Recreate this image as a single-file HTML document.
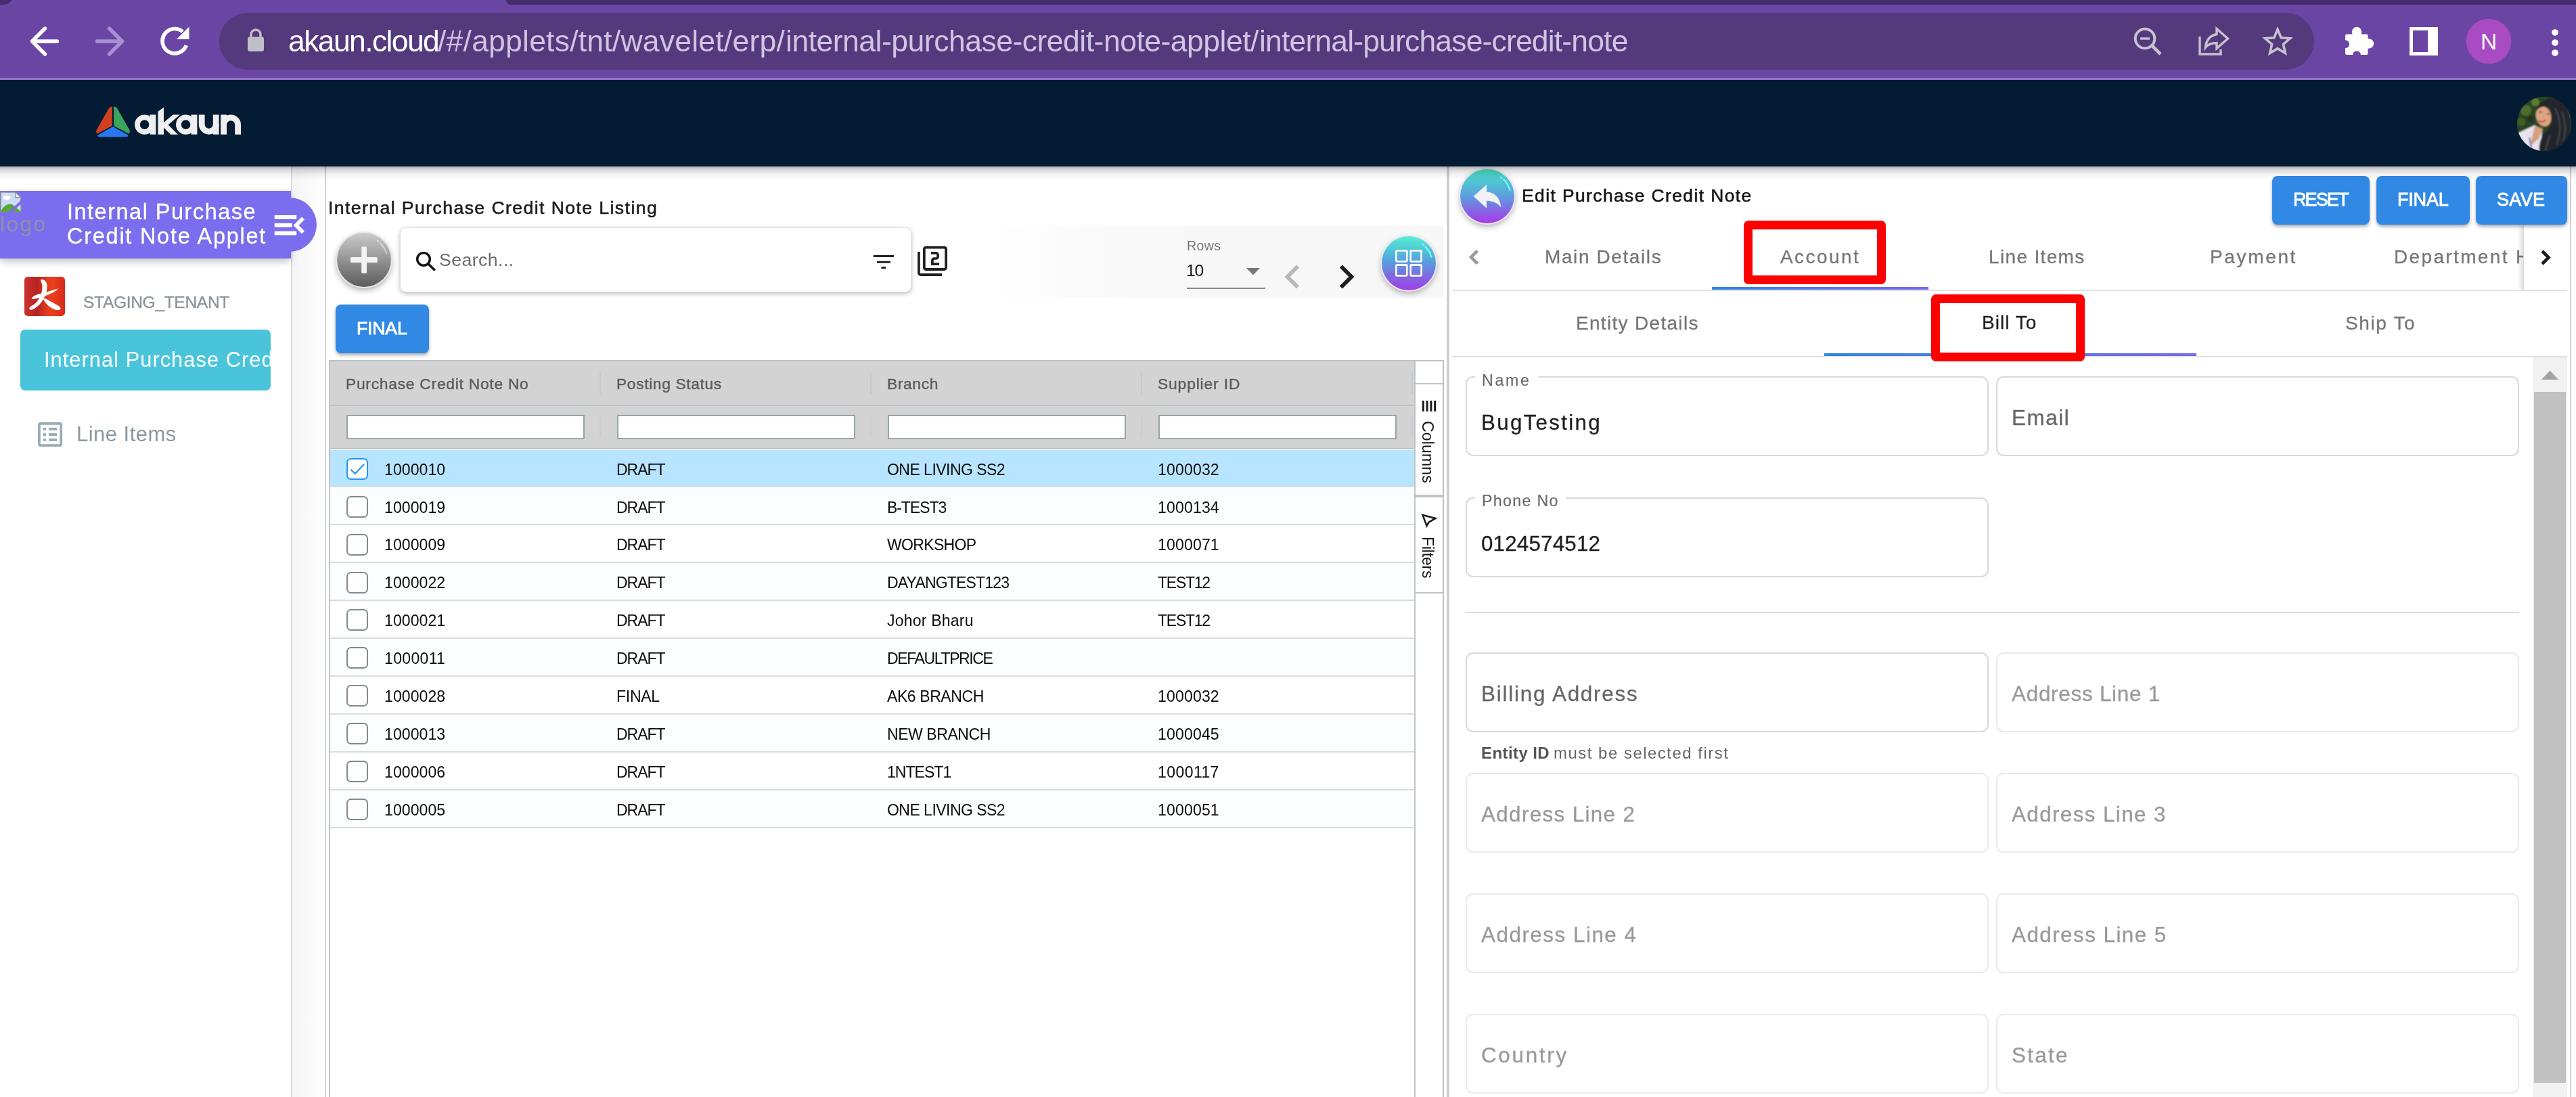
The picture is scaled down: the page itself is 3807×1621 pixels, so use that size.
<!DOCTYPE html><html><head><meta charset="utf-8"><title>Internal Purchase Credit Note</title><style>html,body{margin:0;padding:0;background:#fff;}body{width:3807px;height:1621px;position:relative;overflow:hidden;font-family:"Liberation Sans", sans-serif;}svg{position:absolute;overflow:visible}</style></head><body><div style="position:absolute;left:0px;top:0px;width:3807px;height:118px;background:#6b45a4"></div><div style="position:absolute;left:0px;top:114.5px;width:3807px;height:3.5px;background:#9675c7"></div><div style="position:absolute;left:748px;top:0px;width:3100px;height:7px;background:#452c6d;border-radius:0 0 0 9px"></div><div style="position:absolute;left:-12px;top:-12px;width:31px;height:18.5px;background:#452c6d;border-radius:0 0 14px 0"></div><div style="position:absolute;left:324px;top:19px;width:3096px;height:84px;background:#54397d;border-radius:42px"></div><svg style="left:0;top:0;" width="3807" height="1621" viewBox="0 0 3807 1621"><g fill="none" stroke="#fff" stroke-width="5.4" stroke-linecap="round" stroke-linejoin="round"><path d="M84.5 61H48.5M66.5 42L47.5 61L66.5 80"/></g><g fill="none" stroke="#a88fd3" stroke-width="5.4" stroke-linecap="round" stroke-linejoin="round"><path d="M143.5 61H179.5M161.5 42L180.5 61L161.5 80"/></g><g fill="none" stroke="#fff" stroke-width="5.6"><path d="M275.3 67A18.2 18.2 0 1 1 270 46.8"/></g><path d="M279.5 39.5V58H261Z" fill="#fff"/><rect x="366" y="54.5" width="24" height="21.5" rx="3" fill="#c0bfc6"/><path d="M371 56V51a7 7 0 0 1 14 0V56" fill="none" stroke="#c0bfc6" stroke-width="3.4"/><g fill="none" stroke="#c6c2cf" stroke-width="4"><circle cx="3170" cy="57" r="14.3"/><path d="M3180.5 67.5L3193 80" stroke-width="4.6"/><path d="M3163 57H3177" stroke-width="3.4"/></g><g fill="none" stroke="#c6c2cf" stroke-width="3.4" stroke-linejoin="miter"><path d="M3251 54V80H3282V73"/><path d="M3276 42.5L3292.5 57L3276 71.5V63.5C3268 63.5 3263 65.5 3259.5 70C3260.5 60 3266 52.5 3276 50.5Z"/></g><path d="M3366.0 43.4L3371.2 55.7L3384.5 56.8L3374.4 65.5L3377.4 78.5L3366.0 71.6L3354.6 78.5L3357.6 65.5L3347.5 56.8L3360.8 55.7Z" fill="none" stroke="#c6c2cf" stroke-width="3.6" stroke-linejoin="miter"/><rect x="3466" y="50.5" width="33.5" height="30.5" rx="2.5" fill="#fff"/><circle cx="3483" cy="47" r="7.2" fill="#fff"/><circle cx="3501" cy="64.5" r="7.2" fill="#fff"/><circle cx="3466" cy="65.3" r="6" fill="#6b45a4"/><circle cx="3483" cy="81.3" r="6" fill="#6b45a4"/><rect x="3563.5" y="42.5" width="37" height="37" fill="none" stroke="#fff" stroke-width="5"/><rect x="3588" y="42" width="14" height="38" fill="#fff"/><circle cx="3678" cy="61" r="33.3" fill="#a94bc2"/><circle cx="3776" cy="48" r="4.8" fill="#fff"/><circle cx="3776" cy="63" r="4.8" fill="#fff"/><circle cx="3776" cy="78" r="4.8" fill="#fff"/></svg><div id="t0" style="position:absolute;left:426.33px;top:38.53px;font-size:44.5px;line-height:44.5px;white-space:nowrap;will-change:transform;color:#fff;font-weight:400;letter-spacing:-1.613px;">akaun.cloud</div><div id="t1" style="position:absolute;left:646.93px;top:38.53px;font-size:44.5px;line-height:44.5px;white-space:nowrap;will-change:transform;color:#cfc4e2;font-weight:400;letter-spacing:0.217px;">/#/applets/tnt/wavelet/erp/</div><div id="t2" style="position:absolute;left:1160.63px;top:38.53px;font-size:44.5px;line-height:44.5px;white-space:nowrap;will-change:transform;color:#cfc4e2;font-weight:400;letter-spacing:-0.496px;">internal-purchase-credit-note-applet/</div><div id="t3" style="position:absolute;left:1861.33px;top:38.53px;font-size:44.5px;line-height:44.5px;white-space:nowrap;will-change:transform;color:#cfc4e2;font-weight:400;letter-spacing:-0.840px;">internal-purchase-credit-note</div><div id="t4" style="position:absolute;left:3665.98px;top:45.36px;font-size:33.6px;line-height:33.6px;white-space:nowrap;will-change:transform;color:#fff;font-weight:400;letter-spacing:-1.562px;">N</div><div style="position:absolute;left:430px;top:246px;width:51px;height:1400px;background:linear-gradient(90deg,#f5f5f5,#fefefe)"></div><div style="position:absolute;left:430px;top:246px;width:2px;height:1400px;background:#dcdcdc"></div><div style="position:absolute;left:480px;top:246px;width:2px;height:1400px;background:#d0d0d0"></div><div style="position:absolute;left:2138px;top:246px;width:4px;height:1400px;background:#cfcfcf"></div><div style="position:absolute;left:3798px;top:246px;width:2px;height:1400px;background:#d2d2d2"></div><div style="position:absolute;left:0px;top:282px;width:430px;height:100px;background:#7a6dee;box-shadow:0 5px 10px rgba(0,0,0,.22)"></div><div style="position:absolute;left:388px;top:292px;width:80px;height:80px;background:#7a6dee;border-radius:50%"></div><svg style="left:0;top:0;" width="3807" height="1621" viewBox="0 0 3807 1621"><path d="M1 284H23L31 292V313H1Z" fill="#cfdcf5" stroke="#8a8f99" stroke-width="1.6"/><path d="M23 284V292H31Z" fill="#f4f4f4" stroke="#8a8f99" stroke-width="1.4"/><path d="M1 313C5 303 14 298 21 304L31 313Z" fill="#5aa836"/><ellipse cx="10" cy="292" rx="5.5" ry="3.2" fill="#fff"/><path d="M12 316L34 296" stroke="#7a6dee" stroke-width="4"/></svg><div id="t5" style="position:absolute;left:-0.40px;top:316.05px;font-size:31.6px;line-height:31.6px;white-space:nowrap;will-change:transform;color:#9290a8;font-weight:400;letter-spacing:2.448px;">logo</div><div id="t6" style="position:absolute;left:99.05px;top:297.19px;font-size:32.5px;line-height:32.5px;white-space:nowrap;will-change:transform;color:#fff;font-weight:400;letter-spacing:1.492px;-webkit-text-stroke:.3px #fff;">Internal Purchase</div><div id="t7" style="position:absolute;left:98.55px;top:333.09px;font-size:32.5px;line-height:32.5px;white-space:nowrap;will-change:transform;color:#fff;font-weight:400;letter-spacing:1.741px;-webkit-text-stroke:.3px #fff;">Credit Note Applet</div><svg style="left:0;top:0;" width="3807" height="1621" viewBox="0 0 3807 1621"><g fill="#fff"><rect x="405.7" y="318" width="32.5" height="5.8"/><rect x="405.7" y="329.8" width="26" height="5.8"/><rect x="405.7" y="341.6" width="32.5" height="5.8"/></g><path d="M448 322.5L437.5 333L448 343.5" fill="none" stroke="#fff" stroke-width="5.6"/></svg><div style="position:absolute;left:36px;top:409px;width:60px;height:57.5px;border-radius:5px;background:linear-gradient(90deg,#cc332d 0%,#b72323 32%,#e23a1d 55%,#e8401c 70%,#d72a1b 100%)"></div><svg style="left:0;top:0;" width="3807" height="1621" viewBox="0 0 3807 1621"><g fill="#fff"><path d="M46.5 441C50 436 56 434.5 62 433.5L86.5 426.3C81 432 70 436.5 60 439.5C55 441 49.5 443 46.5 441Z"/><path d="M60.3 413.3C64 411.8 69 415.5 69.6 421C70.3 435 62 449.5 50.5 456.3C47 458.3 42.8 458.3 43.4 455.3C44 452.8 48 452 52 448.5C60 441 63.3 430 62.3 421C62 418 59.8 416 60.3 413.3Z"/><path d="M63 440C68 441.3 74 444.8 80 448.3C85 451.3 89.8 453 89.6 456C89.2 459 83 458.6 78 456.2C71 452.6 66 447 63 440Z"/></g></svg><div id="t8" style="position:absolute;left:122.92px;top:434.78px;font-size:24.6px;line-height:24.6px;white-space:nowrap;will-change:transform;color:#8b949a;font-weight:400;letter-spacing:-0.354px;-webkit-text-stroke:.35px #8b949a;">STAGING_TENANT</div><div style="position:absolute;left:30px;top:487px;width:370px;height:90px;background:#4ac4da;border-radius:7px"></div><div id="t9" style="position:absolute;left:64.55px;top:516.53px;font-size:30.8px;line-height:30.8px;white-space:nowrap;will-change:transform;color:#fff;font-weight:400;letter-spacing:1.040px;width:334.5px;overflow:hidden;">Internal Purchase Credit</div><svg style="left:0;top:0;" width="3807" height="1621" viewBox="0 0 3807 1621"><rect x="57.95" y="625.95" width="32.3" height="32.1" rx="1.6" fill="none" stroke="#9aabb4" stroke-width="3.7"/><g fill="#9aabb4"><rect x="64" y="632" width="4.1" height="3.9"/><rect x="72" y="632" width="12.1" height="3.9"/><rect x="64" y="640.1" width="4.1" height="3.9"/><rect x="72" y="640.1" width="12.1" height="3.9"/><rect x="64" y="648" width="4.1" height="3.9"/><rect x="72" y="648" width="12.1" height="3.9"/></g></svg><div id="t10" style="position:absolute;left:113.14px;top:625.76px;font-size:31px;line-height:31px;white-space:nowrap;will-change:transform;color:#8d979f;font-weight:400;letter-spacing:0.476px;">Line Items</div><div id="t11" style="position:absolute;left:485.40px;top:294.28px;font-size:26.6px;line-height:26.6px;white-space:nowrap;will-change:transform;color:#1b1b1b;font-weight:400;letter-spacing:1.420px;-webkit-text-stroke:.55px #1b1b1b;">Internal Purchase Credit Note Listing</div><div style="position:absolute;left:1460px;top:334px;width:674px;height:106px;background:linear-gradient(90deg,rgba(247,247,247,0),#fafafa 140px,#f7f7f7 330px)"></div><div style="position:absolute;left:498px;top:344px;width:80px;height:80px;border-radius:50%;background:linear-gradient(#cbcbcb,#a2a2a2 38%,#7c7c7c 70%,#5c5c5c);box-shadow:0 0 0 2px #ece5f2,0 4px 9px 1px rgba(0,0,0,.32)"></div><svg style="left:0;top:0;" width="3807" height="1621" viewBox="0 0 3807 1621"><g fill="#f2f2f2"><rect x="517.8" y="380.1" width="40.1" height="7.8" rx="2"/><rect x="534.2" y="364.2" width="7.8" height="39.8" rx="2"/></g><path d="M557 355.2A36 36 0 0 1 571.6 375.6" fill="none" stroke="rgba(255,255,255,.5)" stroke-width="2" stroke-dasharray="4 2 30"/></svg><div style="position:absolute;left:591px;top:336px;width:756px;height:95.5px;background:#fff;border-radius:9px;box-shadow:0 2px 6px rgba(0,0,0,.28);border:1px solid #e2e2e2;box-sizing:border-box"></div><svg style="left:0;top:0;" width="3807" height="1621" viewBox="0 0 3807 1621"><circle cx="626" cy="382.9" r="9.3" fill="none" stroke="#111" stroke-width="3.4"/><path d="M633 389.9L642.8 399.4" stroke="#111" stroke-width="3.5"/></svg><div id="t12" style="position:absolute;left:649.40px;top:371.28px;font-size:26.6px;line-height:26.6px;white-space:nowrap;will-change:transform;color:#6b6b6b;font-weight:400;letter-spacing:0.466px;">Search...</div><svg style="left:0;top:0;" width="3807" height="1621" viewBox="0 0 3807 1621"><g fill="#222"><rect x="1290.7" y="377" width="30.3" height="3"/><rect x="1296" y="385.8" width="20" height="3"/><rect x="1302.4" y="394" width="6.6" height="3"/></g></svg><svg style="left:0;top:0;" width="3807" height="1621" viewBox="0 0 3807 1621"><rect x="1365.8" y="365.6" width="32.3" height="32.4" rx="2.6" fill="none" stroke="#1f1f1f" stroke-width="3.8"/><path d="M1357.9 372V403a3 3 0 0 0 3 3H1392" fill="none" stroke="#1f1f1f" stroke-width="3.8"/><path d="M1376 373.9H1383.4a2.7 2.7 0 0 1 2.7 2.7V379.3a2.7 2.7 0 0 1-2.7 2.7H1380.6a2.7 2.7 0 0 0-2.7 2.7V390.2H1388" fill="none" stroke="#1f1f1f" stroke-width="3.7"/></svg><div id="t13" style="position:absolute;left:1753.52px;top:354.31px;font-size:19.6px;line-height:19.6px;white-space:nowrap;will-change:transform;color:#787878;font-weight:400;letter-spacing:0.317px;">Rows</div><div id="t14" style="position:absolute;left:1753.22px;top:387.98px;font-size:24.6px;line-height:24.6px;white-space:nowrap;will-change:transform;color:#151515;font-weight:400;letter-spacing:-1.296px;">10</div><svg style="left:0;top:0;" width="3807" height="1621" viewBox="0 0 3807 1621"><path d="M1842 396H1862L1852 406.2Z" fill="#767676"/></svg><div style="position:absolute;left:1754px;top:425px;width:116px;height:2px;background:#8a8a8a"></div><svg style="left:0;top:0;" width="3807" height="1621" viewBox="0 0 3807 1621"><path d="M1918 393.5L1902.5 409L1918 424.5" fill="none" stroke="#b8b8b8" stroke-width="5.8"/><path d="M1981.8 393.5L1997.3 409L1981.8 424.5" fill="none" stroke="#1d1d1d" stroke-width="5.8"/></svg><div style="position:absolute;left:2042px;top:348.5px;width:80px;height:80px;border-radius:50%;background:linear-gradient(#55f0d4,#50bcd8 30%,#5a98e0 50%,#7a70e0 70%,#a23ee6);box-shadow:0 0 0 2px #eee7f4,0 4px 9px 1px rgba(0,0,0,.3)"></div><svg style="left:0;top:0;" width="3807" height="1621" viewBox="0 0 3807 1621"><g fill="none" stroke="#f6f6f6" stroke-width="2.8"><rect x="2063.4" y="370.4" width="15.9" height="15.9" rx="1"/><rect x="2084.7" y="370.4" width="15.9" height="15.9" rx="1"/><rect x="2063.4" y="391.5" width="15.9" height="15.9" rx="1"/><rect x="2084.7" y="391.5" width="15.9" height="15.9" rx="1"/></g><path d="M2101 360.2A36 36 0 0 1 2115.7 380.6" fill="none" stroke="rgba(130,250,250,.9)" stroke-width="2.2" stroke-dasharray="4 2 30"/></svg><div style="position:absolute;left:496px;top:450px;width:138px;height:71.5px;background:#3189e5;border-radius:8px;box-shadow:0 3px 5px rgba(0,0,0,.32)"></div><div id="t15" style="position:absolute;left:527.40px;top:471.98px;font-size:26.6px;line-height:26.6px;white-space:nowrap;will-change:transform;color:#fff;font-weight:400;letter-spacing:-0.169px;-webkit-text-stroke:.85px #fff;">FINAL</div><div style="position:absolute;left:486px;top:532px;width:1648px;height:1120px;border:2px solid #bdc3c7;box-sizing:border-box;background:#fff"></div><div style="position:absolute;left:488px;top:534px;width:1602.5px;height:130px;background:#d3d3d3"></div><div style="position:absolute;left:488px;top:597.7px;width:1602.5px;height:2px;background:#bdc3c7"></div><div style="position:absolute;left:488px;top:662.3px;width:1602.5px;height:2px;background:#bdc3c7"></div><div style="position:absolute;left:886px;top:550px;width:2px;height:32px;background:#c4c9cc"></div><div style="position:absolute;left:886px;top:615px;width:2px;height:31px;background:#c9cdd0"></div><div style="position:absolute;left:1286px;top:550px;width:2px;height:32px;background:#c4c9cc"></div><div style="position:absolute;left:1286px;top:615px;width:2px;height:31px;background:#c9cdd0"></div><div style="position:absolute;left:1686px;top:550px;width:2px;height:32px;background:#c4c9cc"></div><div style="position:absolute;left:1686px;top:615px;width:2px;height:31px;background:#c9cdd0"></div><div style="position:absolute;left:2086px;top:550px;width:2px;height:32px;background:#c4c9cc"></div><div style="position:absolute;left:2086px;top:615px;width:2px;height:31px;background:#c9cdd0"></div><div id="t16" style="position:absolute;left:511.33px;top:556.20px;font-size:22.8px;line-height:22.8px;white-space:nowrap;will-change:transform;color:#5c5c5c;font-weight:400;letter-spacing:0.744px;-webkit-text-stroke:.45px #5c5c5c;">Purchase Credit Note No</div><div id="t17" style="position:absolute;left:910.93px;top:556.20px;font-size:22.8px;line-height:22.8px;white-space:nowrap;will-change:transform;color:#5c5c5c;font-weight:400;letter-spacing:0.630px;-webkit-text-stroke:.45px #5c5c5c;">Posting Status</div><div id="t18" style="position:absolute;left:1311.23px;top:556.20px;font-size:22.8px;line-height:22.8px;white-space:nowrap;will-change:transform;color:#5c5c5c;font-weight:400;letter-spacing:0.632px;-webkit-text-stroke:.45px #5c5c5c;">Branch</div><div id="t19" style="position:absolute;left:1710.93px;top:556.20px;font-size:22.8px;line-height:22.8px;white-space:nowrap;will-change:transform;color:#5c5c5c;font-weight:400;letter-spacing:0.858px;-webkit-text-stroke:.45px #5c5c5c;">Supplier ID</div><div style="position:absolute;left:512px;top:613px;width:351.5px;height:35.7px;background:#fff;border:2px solid #95a5a6;box-sizing:border-box"></div><div style="position:absolute;left:912px;top:613px;width:351.5px;height:35.7px;background:#fff;border:2px solid #95a5a6;box-sizing:border-box"></div><div style="position:absolute;left:1312px;top:613px;width:351.5px;height:35.7px;background:#fff;border:2px solid #95a5a6;box-sizing:border-box"></div><div style="position:absolute;left:1712px;top:613px;width:351.5px;height:35.7px;background:#fff;border:2px solid #95a5a6;box-sizing:border-box"></div><div style="position:absolute;left:488px;top:664.5px;width:1602.5px;height:53.92px;background:#b7e4ff"></div><div style="position:absolute;left:488px;top:718.2199999999999px;width:1602.5px;height:2px;background:#d9dcde"></div><div style="position:absolute;left:512px;top:676.8px;width:32px;height:32px;border:2px solid #2196f3;border-radius:6.5px;background:#fff;box-sizing:border-box"></div><svg style="left:0;top:0;" width="3807" height="1621" viewBox="0 0 3807 1621"><path d="M518.5 694.0L524.8 700.0L538 686.0" fill="none" stroke="#2691ee" stroke-width="2.1"/></svg><div id="t20" style="position:absolute;left:568.22px;top:682.63px;font-size:23px;line-height:23px;white-space:nowrap;will-change:transform;color:#0a0a0a;font-weight:400;letter-spacing:0.099px;">1000010</div><div id="t21" style="position:absolute;left:911.22px;top:682.63px;font-size:23px;line-height:23px;white-space:nowrap;will-change:transform;color:#0a0a0a;font-weight:400;letter-spacing:-1.046px;">DRAFT</div><div id="t22" style="position:absolute;left:1311.22px;top:682.63px;font-size:23px;line-height:23px;white-space:nowrap;will-change:transform;color:#0a0a0a;font-weight:400;letter-spacing:-0.527px;">ONE LIVING SS2</div><div id="t23" style="position:absolute;left:1711.42px;top:682.63px;font-size:23px;line-height:23px;white-space:nowrap;will-change:transform;color:#0a0a0a;font-weight:400;letter-spacing:0.185px;">1000032</div><div style="position:absolute;left:488px;top:720.42px;width:1602.5px;height:53.92px;background:#fcfdfe"></div><div style="position:absolute;left:488px;top:774.1399999999999px;width:1602.5px;height:2px;background:#d9dcde"></div><div style="position:absolute;left:512px;top:732.7199999999999px;width:32px;height:32px;border:2px solid #7f8c8d;border-radius:6.5px;background:#fff;box-sizing:border-box"></div><div id="t24" style="position:absolute;left:568.22px;top:738.55px;font-size:23px;line-height:23px;white-space:nowrap;will-change:transform;color:#0a0a0a;font-weight:400;letter-spacing:0.099px;">1000019</div><div id="t25" style="position:absolute;left:911.22px;top:738.55px;font-size:23px;line-height:23px;white-space:nowrap;will-change:transform;color:#0a0a0a;font-weight:400;letter-spacing:-1.046px;">DRAFT</div><div id="t26" style="position:absolute;left:1311.22px;top:738.55px;font-size:23px;line-height:23px;white-space:nowrap;will-change:transform;color:#0a0a0a;font-weight:400;letter-spacing:-1.063px;">B-TEST3</div><div id="t27" style="position:absolute;left:1711.42px;top:738.55px;font-size:23px;line-height:23px;white-space:nowrap;will-change:transform;color:#0a0a0a;font-weight:400;letter-spacing:0.185px;">1000134</div><div style="position:absolute;left:488px;top:776.34px;width:1602.5px;height:53.92px;background:#fff"></div><div style="position:absolute;left:488px;top:830.06px;width:1602.5px;height:2px;background:#d9dcde"></div><div style="position:absolute;left:512px;top:788.64px;width:32px;height:32px;border:2px solid #7f8c8d;border-radius:6.5px;background:#fff;box-sizing:border-box"></div><div id="t28" style="position:absolute;left:568.22px;top:794.47px;font-size:23px;line-height:23px;white-space:nowrap;will-change:transform;color:#0a0a0a;font-weight:400;letter-spacing:0.099px;">1000009</div><div id="t29" style="position:absolute;left:911.22px;top:794.47px;font-size:23px;line-height:23px;white-space:nowrap;will-change:transform;color:#0a0a0a;font-weight:400;letter-spacing:-1.046px;">DRAFT</div><div id="t30" style="position:absolute;left:1311.22px;top:794.47px;font-size:23px;line-height:23px;white-space:nowrap;will-change:transform;color:#0a0a0a;font-weight:400;letter-spacing:-0.662px;">WORKSHOP</div><div id="t31" style="position:absolute;left:1711.42px;top:794.47px;font-size:23px;line-height:23px;white-space:nowrap;will-change:transform;color:#0a0a0a;font-weight:400;letter-spacing:0.185px;">1000071</div><div style="position:absolute;left:488px;top:832.26px;width:1602.5px;height:53.92px;background:#fcfdfe"></div><div style="position:absolute;left:488px;top:885.9799999999999px;width:1602.5px;height:2px;background:#d9dcde"></div><div style="position:absolute;left:512px;top:844.56px;width:32px;height:32px;border:2px solid #7f8c8d;border-radius:6.5px;background:#fff;box-sizing:border-box"></div><div id="t32" style="position:absolute;left:568.22px;top:850.39px;font-size:23px;line-height:23px;white-space:nowrap;will-change:transform;color:#0a0a0a;font-weight:400;letter-spacing:0.099px;">1000022</div><div id="t33" style="position:absolute;left:911.22px;top:850.39px;font-size:23px;line-height:23px;white-space:nowrap;will-change:transform;color:#0a0a0a;font-weight:400;letter-spacing:-1.046px;">DRAFT</div><div id="t34" style="position:absolute;left:1311.22px;top:850.39px;font-size:23px;line-height:23px;white-space:nowrap;will-change:transform;color:#0a0a0a;font-weight:400;letter-spacing:-0.826px;">DAYANGTEST123</div><div id="t35" style="position:absolute;left:1711.42px;top:850.39px;font-size:23px;line-height:23px;white-space:nowrap;will-change:transform;color:#0a0a0a;font-weight:400;letter-spacing:-1.256px;">TEST12</div><div style="position:absolute;left:488px;top:888.1800000000001px;width:1602.5px;height:53.92px;background:#fff"></div><div style="position:absolute;left:488px;top:941.9px;width:1602.5px;height:2px;background:#d9dcde"></div><div style="position:absolute;left:512px;top:900.48px;width:32px;height:32px;border:2px solid #7f8c8d;border-radius:6.5px;background:#fff;box-sizing:border-box"></div><div id="t36" style="position:absolute;left:568.22px;top:906.31px;font-size:23px;line-height:23px;white-space:nowrap;will-change:transform;color:#0a0a0a;font-weight:400;letter-spacing:0.099px;">1000021</div><div id="t37" style="position:absolute;left:911.22px;top:906.31px;font-size:23px;line-height:23px;white-space:nowrap;will-change:transform;color:#0a0a0a;font-weight:400;letter-spacing:-1.046px;">DRAFT</div><div id="t38" style="position:absolute;left:1311.22px;top:906.31px;font-size:23px;line-height:23px;white-space:nowrap;will-change:transform;color:#0a0a0a;font-weight:400;letter-spacing:0.212px;">Johor Bharu</div><div id="t39" style="position:absolute;left:1711.42px;top:906.31px;font-size:23px;line-height:23px;white-space:nowrap;will-change:transform;color:#0a0a0a;font-weight:400;letter-spacing:-1.256px;">TEST12</div><div style="position:absolute;left:488px;top:944.1px;width:1602.5px;height:53.92px;background:#fcfdfe"></div><div style="position:absolute;left:488px;top:997.8199999999999px;width:1602.5px;height:2px;background:#d9dcde"></div><div style="position:absolute;left:512px;top:956.4px;width:32px;height:32px;border:2px solid #7f8c8d;border-radius:6.5px;background:#fff;box-sizing:border-box"></div><div id="t40" style="position:absolute;left:568.22px;top:962.23px;font-size:23px;line-height:23px;white-space:nowrap;will-change:transform;color:#0a0a0a;font-weight:400;letter-spacing:0.342px;">1000011</div><div id="t41" style="position:absolute;left:911.22px;top:962.23px;font-size:23px;line-height:23px;white-space:nowrap;will-change:transform;color:#0a0a0a;font-weight:400;letter-spacing:-1.046px;">DRAFT</div><div id="t42" style="position:absolute;left:1311.22px;top:962.23px;font-size:23px;line-height:23px;white-space:nowrap;will-change:transform;color:#0a0a0a;font-weight:400;letter-spacing:-1.381px;">DEFAULTPRICE</div><div style="position:absolute;left:488px;top:1000.02px;width:1602.5px;height:53.92px;background:#fff"></div><div style="position:absolute;left:488px;top:1053.74px;width:1602.5px;height:2px;background:#d9dcde"></div><div style="position:absolute;left:512px;top:1012.3199999999999px;width:32px;height:32px;border:2px solid #7f8c8d;border-radius:6.5px;background:#fff;box-sizing:border-box"></div><div id="t43" style="position:absolute;left:568.22px;top:1018.15px;font-size:23px;line-height:23px;white-space:nowrap;will-change:transform;color:#0a0a0a;font-weight:400;letter-spacing:0.099px;">1000028</div><div id="t44" style="position:absolute;left:911.22px;top:1018.15px;font-size:23px;line-height:23px;white-space:nowrap;will-change:transform;color:#0a0a0a;font-weight:400;letter-spacing:-0.269px;">FINAL</div><div id="t45" style="position:absolute;left:1311.22px;top:1018.15px;font-size:23px;line-height:23px;white-space:nowrap;will-change:transform;color:#0a0a0a;font-weight:400;letter-spacing:-0.414px;">AK6 BRANCH</div><div id="t46" style="position:absolute;left:1711.42px;top:1018.15px;font-size:23px;line-height:23px;white-space:nowrap;will-change:transform;color:#0a0a0a;font-weight:400;letter-spacing:0.185px;">1000032</div><div style="position:absolute;left:488px;top:1055.94px;width:1602.5px;height:53.92px;background:#fcfdfe"></div><div style="position:absolute;left:488px;top:1109.66px;width:1602.5px;height:2px;background:#d9dcde"></div><div style="position:absolute;left:512px;top:1068.24px;width:32px;height:32px;border:2px solid #7f8c8d;border-radius:6.5px;background:#fff;box-sizing:border-box"></div><div id="t47" style="position:absolute;left:568.22px;top:1074.07px;font-size:23px;line-height:23px;white-space:nowrap;will-change:transform;color:#0a0a0a;font-weight:400;letter-spacing:0.099px;">1000013</div><div id="t48" style="position:absolute;left:911.22px;top:1074.07px;font-size:23px;line-height:23px;white-space:nowrap;will-change:transform;color:#0a0a0a;font-weight:400;letter-spacing:-1.046px;">DRAFT</div><div id="t49" style="position:absolute;left:1311.22px;top:1074.07px;font-size:23px;line-height:23px;white-space:nowrap;will-change:transform;color:#0a0a0a;font-weight:400;letter-spacing:-0.433px;">NEW BRANCH</div><div id="t50" style="position:absolute;left:1711.42px;top:1074.07px;font-size:23px;line-height:23px;white-space:nowrap;will-change:transform;color:#0a0a0a;font-weight:400;letter-spacing:0.185px;">1000045</div><div style="position:absolute;left:488px;top:1111.8600000000001px;width:1602.5px;height:53.92px;background:#fff"></div><div style="position:absolute;left:488px;top:1165.5800000000002px;width:1602.5px;height:2px;background:#d9dcde"></div><div style="position:absolute;left:512px;top:1124.16px;width:32px;height:32px;border:2px solid #7f8c8d;border-radius:6.5px;background:#fff;box-sizing:border-box"></div><div id="t51" style="position:absolute;left:568.22px;top:1129.99px;font-size:23px;line-height:23px;white-space:nowrap;will-change:transform;color:#0a0a0a;font-weight:400;letter-spacing:0.099px;">1000006</div><div id="t52" style="position:absolute;left:911.22px;top:1129.99px;font-size:23px;line-height:23px;white-space:nowrap;will-change:transform;color:#0a0a0a;font-weight:400;letter-spacing:-1.046px;">DRAFT</div><div id="t53" style="position:absolute;left:1311.22px;top:1129.99px;font-size:23px;line-height:23px;white-space:nowrap;will-change:transform;color:#0a0a0a;font-weight:400;letter-spacing:-0.963px;">1NTEST1</div><div id="t54" style="position:absolute;left:1711.42px;top:1129.99px;font-size:23px;line-height:23px;white-space:nowrap;will-change:transform;color:#0a0a0a;font-weight:400;letter-spacing:0.428px;">1000117</div><div style="position:absolute;left:488px;top:1167.78px;width:1602.5px;height:53.92px;background:#fcfdfe"></div><div style="position:absolute;left:488px;top:1221.5px;width:1602.5px;height:2px;background:#d9dcde"></div><div style="position:absolute;left:512px;top:1180.08px;width:32px;height:32px;border:2px solid #7f8c8d;border-radius:6.5px;background:#fff;box-sizing:border-box"></div><div id="t55" style="position:absolute;left:568.22px;top:1185.91px;font-size:23px;line-height:23px;white-space:nowrap;will-change:transform;color:#0a0a0a;font-weight:400;letter-spacing:0.099px;">1000005</div><div id="t56" style="position:absolute;left:911.22px;top:1185.91px;font-size:23px;line-height:23px;white-space:nowrap;will-change:transform;color:#0a0a0a;font-weight:400;letter-spacing:-1.046px;">DRAFT</div><div id="t57" style="position:absolute;left:1311.22px;top:1185.91px;font-size:23px;line-height:23px;white-space:nowrap;will-change:transform;color:#0a0a0a;font-weight:400;letter-spacing:-0.527px;">ONE LIVING SS2</div><div id="t58" style="position:absolute;left:1711.42px;top:1185.91px;font-size:23px;line-height:23px;white-space:nowrap;will-change:transform;color:#0a0a0a;font-weight:400;letter-spacing:0.185px;">1000051</div><div style="position:absolute;left:2090px;top:534px;width:42px;height:1120px;background:#fff;border-left:2px solid #bdc3c7;box-sizing:border-box"></div><div style="position:absolute;left:2092px;top:565.8px;width:40px;height:2px;background:#bdc3c7"></div><div style="position:absolute;left:2092px;top:730.5px;width:40px;height:4px;background:#bdc3c7"></div><div style="position:absolute;left:2092px;top:875px;width:40px;height:2px;background:#bdc3c7"></div><svg style="left:0;top:0;" width="3807" height="1621" viewBox="0 0 3807 1621"><g fill="#1a1a1a"><rect x="2101.8" y="592" width="3" height="16"/><rect x="2107.6" y="592" width="3" height="16"/><rect x="2113.4" y="592" width="3" height="16"/><rect x="2119.2" y="592" width="3" height="16"/></g><path d="M2102.6 761L2121.4 766L2111.6 771.6L2108.6 777L2106 770.4Z" fill="none" stroke="#1a1a1a" stroke-width="2.6" stroke-linejoin="miter"/></svg><div id="t59" style="position:absolute;left:2121.27px;top:622.28px;font-size:23px;line-height:23px;white-space:nowrap;will-change:transform;color:#111;font-weight:400;letter-spacing:0.153px;transform-origin:0 0;transform:rotate(90deg);">Columns</div><div id="t60" style="position:absolute;left:2121.27px;top:792.68px;font-size:23px;line-height:23px;white-space:nowrap;will-change:transform;color:#111;font-weight:400;letter-spacing:-0.169px;transform-origin:0 0;transform:rotate(90deg);">Filters</div><div style="position:absolute;left:2158px;top:250px;width:80px;height:80px;border-radius:50%;background:linear-gradient(#46dcc0,#4fc6d2 22%,#5d9ee0 50%,#8a62e4 78%,#a83ae8);box-shadow:0 0 0 2px #eee7f4,0 4px 9px 1px rgba(0,0,0,.3)"></div><svg style="left:0;top:0;" width="3807" height="1621" viewBox="0 0 3807 1621"><path d="M2178.1 290L2196.7 273.6V283.8C2207.5 284.3 2216.2 291 2217.8 305.3C2213 299.3 2206 296.5 2196.7 296.2V306.9Z" fill="#f1f1f1" stroke="#f1f1f1" stroke-width=".8" stroke-linejoin="round"/><path d="M2217 261.2A36 36 0 0 1 2231.7 281.6" fill="none" stroke="rgba(130,250,250,.9)" stroke-width="2.2" stroke-dasharray="4 2 30"/></svg><div id="t61" style="position:absolute;left:2249.42px;top:276.15px;font-size:26.4px;line-height:26.4px;white-space:nowrap;will-change:transform;color:#141414;font-weight:400;letter-spacing:1.424px;-webkit-text-stroke:.55px #141414;">Edit Purchase Credit Note</div><div style="position:absolute;left:3729px;top:332px;width:65px;height:96px;background:#fff;box-shadow:-4px 0 6px rgba(0,0,0,.14);border-left:1.5px solid #dcdcdc;box-sizing:border-box"></div><div style="position:absolute;left:3358px;top:260px;width:143.5px;height:71.5px;background:#3189e5;border-radius:8px;box-shadow:0 3px 5px rgba(0,0,0,.32)"></div><div id="t62" style="position:absolute;left:3388.98px;top:281.94px;font-size:27px;line-height:27px;white-space:nowrap;will-change:transform;color:#fff;font-weight:400;letter-spacing:-1.894px;-webkit-text-stroke:.85px #fff;">RESET</div><div style="position:absolute;left:3512px;top:260px;width:137.5px;height:71.5px;background:#3189e5;border-radius:8px;box-shadow:0 3px 5px rgba(0,0,0,.32)"></div><div id="t63" style="position:absolute;left:3542.78px;top:281.94px;font-size:27px;line-height:27px;white-space:nowrap;will-change:transform;color:#fff;font-weight:400;letter-spacing:-0.194px;-webkit-text-stroke:.85px #fff;">FINAL</div><div style="position:absolute;left:3659px;top:260px;width:134.5px;height:71.5px;background:#3189e5;border-radius:8px;box-shadow:0 3px 5px rgba(0,0,0,.32)"></div><div id="t64" style="position:absolute;left:3689.58px;top:281.94px;font-size:27px;line-height:27px;white-space:nowrap;will-change:transform;color:#fff;font-weight:400;letter-spacing:0.332px;-webkit-text-stroke:.85px #fff;">SAVE</div><div style="position:absolute;left:2146px;top:428px;width:1648px;height:2px;background:#e2e2e2"></div><div style="position:absolute;left:2530px;top:424px;width:320px;height:4px;background:linear-gradient(90deg,#2f86de,#7a68ee)"></div><svg style="left:0;top:0;" width="3807" height="1621" viewBox="0 0 3807 1621"><path d="M2183.5 370.5L2174 380L2183.5 389.5" fill="none" stroke="#9a9a9a" stroke-width="4.6"/></svg><div id="t65" style="position:absolute;left:2282.72px;top:366.10px;font-size:28px;line-height:28px;white-space:nowrap;will-change:transform;color:#767676;font-weight:400;letter-spacing:1.598px;-webkit-text-stroke:.3px #767676;">Main Details</div><div id="t66" style="position:absolute;left:2631.12px;top:365.70px;font-size:28px;line-height:28px;white-space:nowrap;will-change:transform;color:#767676;font-weight:400;letter-spacing:2.438px;-webkit-text-stroke:.3px #767676;">Account</div><div id="t67" style="position:absolute;left:2939.02px;top:366.10px;font-size:28px;line-height:28px;white-space:nowrap;will-change:transform;color:#767676;font-weight:400;letter-spacing:1.337px;-webkit-text-stroke:.3px #767676;">Line Items</div><div id="t68" style="position:absolute;left:3266.32px;top:366.10px;font-size:28px;line-height:28px;white-space:nowrap;will-change:transform;color:#767676;font-weight:400;letter-spacing:2.649px;-webkit-text-stroke:.3px #767676;">Payment</div><div id="t69" style="position:absolute;left:3537.72px;top:366.10px;font-size:28px;line-height:28px;white-space:nowrap;will-change:transform;color:#767676;font-weight:400;letter-spacing:2.354px;-webkit-text-stroke:.3px #767676;width:190.6999999999999px;overflow:hidden;">Department Hdr</div><div style="position:absolute;left:3729px;top:428px;width:65px;height:2px;background:#e2e2e2"></div><svg style="left:0;top:0;" width="3807" height="1621" viewBox="0 0 3807 1621"><path d="M3757 371L3766.5 380.5L3757 390" fill="none" stroke="#1e1e1e" stroke-width="4.6"/></svg><div style="position:absolute;left:2146px;top:526px;width:1648px;height:2px;background:#e2e2e2"></div><div style="position:absolute;left:2695.6px;top:522px;width:550.5px;height:4px;background:linear-gradient(90deg,#2f86de,#7a68ee)"></div><div id="t70" style="position:absolute;left:2329.02px;top:463.50px;font-size:28px;line-height:28px;white-space:nowrap;will-change:transform;color:#767676;font-weight:400;letter-spacing:1.310px;-webkit-text-stroke:.3px #767676;">Entity Details</div><div id="t71" style="position:absolute;left:2929.12px;top:463.30px;font-size:28px;line-height:28px;white-space:nowrap;will-change:transform;color:#1f1f1f;font-weight:400;letter-spacing:1.007px;-webkit-text-stroke:.3px #1f1f1f;">Bill To</div><div id="t72" style="position:absolute;left:3466.32px;top:463.50px;font-size:28px;line-height:28px;white-space:nowrap;will-change:transform;color:#767676;font-weight:400;letter-spacing:1.621px;-webkit-text-stroke:.3px #767676;">Ship To</div><div style="position:absolute;left:2577px;top:326px;width:210px;height:94px;border:13px solid #fe0000;border-radius:7px;box-sizing:border-box"></div><div style="position:absolute;left:2854px;top:435px;width:227px;height:99px;border:13px solid #fe0000;border-radius:7px;box-sizing:border-box"></div><div style="position:absolute;left:2166px;top:556px;width:772.8px;height:118px;border:2px solid #d9d9d9;border-radius:11px;box-sizing:border-box;background:#fff"></div><div style="position:absolute;left:2180px;top:554px;width:92.6px;height:8px;background:#fff"></div><div id="t73" style="position:absolute;left:2189.61px;top:550.66px;font-size:23.2px;line-height:23.2px;white-space:nowrap;will-change:transform;color:#6a6a6a;font-weight:400;letter-spacing:2.649px;-webkit-text-stroke:.2px #6a6a6a;">Name</div><div id="t74" style="position:absolute;left:2189.12px;top:609.40px;font-size:31.3px;line-height:31.3px;white-space:nowrap;will-change:transform;color:#1f1f1f;font-weight:400;letter-spacing:2.304px;height:37.5px;overflow:hidden;-webkit-text-stroke:.3px #1f1f1f;">BugTesting</div><div style="position:absolute;left:2950.2px;top:556px;width:772.8px;height:118px;border:2px solid #d9d9d9;border-radius:11px;box-sizing:border-box;background:#fff"></div><div id="t75" style="position:absolute;left:2972.92px;top:601.62px;font-size:31.4px;line-height:31.4px;white-space:nowrap;will-change:transform;color:#666;font-weight:400;letter-spacing:1.562px;-webkit-text-stroke:.3px #666;">Email</div><div style="position:absolute;left:2166px;top:734.5px;width:772.8px;height:118px;border:2px solid #d9d9d9;border-radius:11px;box-sizing:border-box;background:#fff"></div><div style="position:absolute;left:2180px;top:732.5px;width:134px;height:8px;background:#fff"></div><div id="t76" style="position:absolute;left:2189.61px;top:729.16px;font-size:23.2px;line-height:23.2px;white-space:nowrap;will-change:transform;color:#6a6a6a;font-weight:400;letter-spacing:1.339px;-webkit-text-stroke:.2px #6a6a6a;">Phone No</div><div id="t77" style="position:absolute;left:2189.12px;top:787.90px;font-size:31.3px;line-height:31.3px;white-space:nowrap;will-change:transform;color:#1f1f1f;font-weight:400;letter-spacing:0.204px;height:37.5px;overflow:hidden;-webkit-text-stroke:.3px #1f1f1f;">0124574512</div><div style="position:absolute;left:2166px;top:904px;width:1557px;height:2px;background:#dcdcdc"></div><div style="position:absolute;left:2166px;top:964px;width:772.8px;height:118px;border:2px solid #d9d9d9;border-radius:11px;box-sizing:border-box;background:#fff"></div><div id="t78" style="position:absolute;left:2188.72px;top:1009.62px;font-size:31.4px;line-height:31.4px;white-space:nowrap;will-change:transform;color:#666;font-weight:400;letter-spacing:1.774px;-webkit-text-stroke:.3px #666;">Billing Address</div><div style="position:absolute;left:2950.2px;top:964px;width:772.8px;height:118px;border:2px solid #eaeaea;border-radius:11px;box-sizing:border-box;background:#fff"></div><div id="t79" style="position:absolute;left:2972.92px;top:1009.62px;font-size:31.4px;line-height:31.4px;white-space:nowrap;will-change:transform;color:#999;font-weight:400;letter-spacing:0.750px;-webkit-text-stroke:.3px #999;">Address Line 1</div><div id="t80" style="position:absolute;left:2189.16px;top:1101.48px;font-size:24px;line-height:24px;white-space:nowrap;will-change:transform;color:#555;font-weight:700;letter-spacing:0.420px;">Entity ID</div><div id="t81" style="position:absolute;left:2296.06px;top:1101.48px;font-size:24px;line-height:24px;white-space:nowrap;will-change:transform;color:#666;font-weight:400;letter-spacing:1.484px;">must be selected first</div><div style="position:absolute;left:2166px;top:1142px;width:772.8px;height:118px;border:2px solid #eaeaea;border-radius:11px;box-sizing:border-box;background:#fff"></div><div id="t82" style="position:absolute;left:2188.72px;top:1187.62px;font-size:31.4px;line-height:31.4px;white-space:nowrap;will-change:transform;color:#999;font-weight:400;letter-spacing:1.350px;-webkit-text-stroke:.3px #999;">Address Line 2</div><div style="position:absolute;left:2950.2px;top:1142px;width:772.8px;height:118px;border:2px solid #eaeaea;border-radius:11px;box-sizing:border-box;background:#fff"></div><div id="t83" style="position:absolute;left:2972.92px;top:1187.62px;font-size:31.4px;line-height:31.4px;white-space:nowrap;will-change:transform;color:#999;font-weight:400;letter-spacing:1.386px;-webkit-text-stroke:.3px #999;">Address Line 3</div><div style="position:absolute;left:2166px;top:1320px;width:772.8px;height:118px;border:2px solid #eaeaea;border-radius:11px;box-sizing:border-box;background:#fff"></div><div id="t84" style="position:absolute;left:2188.72px;top:1365.62px;font-size:31.4px;line-height:31.4px;white-space:nowrap;will-change:transform;color:#999;font-weight:400;letter-spacing:1.508px;-webkit-text-stroke:.3px #999;">Address Line 4</div><div style="position:absolute;left:2950.2px;top:1320px;width:772.8px;height:118px;border:2px solid #eaeaea;border-radius:11px;box-sizing:border-box;background:#fff"></div><div id="t85" style="position:absolute;left:2972.92px;top:1365.62px;font-size:31.4px;line-height:31.4px;white-space:nowrap;will-change:transform;color:#999;font-weight:400;letter-spacing:1.450px;-webkit-text-stroke:.3px #999;">Address Line 5</div><div style="position:absolute;left:2166px;top:1498px;width:772.8px;height:118px;border:2px solid #eaeaea;border-radius:11px;box-sizing:border-box;background:#fff"></div><div id="t86" style="position:absolute;left:2188.72px;top:1543.62px;font-size:31.4px;line-height:31.4px;white-space:nowrap;will-change:transform;color:#999;font-weight:400;letter-spacing:2.699px;-webkit-text-stroke:.3px #999;">Country</div><div style="position:absolute;left:2950.2px;top:1498px;width:772.8px;height:118px;border:2px solid #eaeaea;border-radius:11px;box-sizing:border-box;background:#fff"></div><div id="t87" style="position:absolute;left:2972.92px;top:1543.62px;font-size:31.4px;line-height:31.4px;white-space:nowrap;will-change:transform;color:#999;font-weight:400;letter-spacing:2.263px;-webkit-text-stroke:.3px #999;">State</div><div style="position:absolute;left:3743.3px;top:528px;width:50.6px;height:1100px;background:#f1f1f1"></div><div style="position:absolute;left:3745px;top:579px;width:47px;height:1020.5px;background:#c1c1c1"></div><svg style="left:0;top:0;" width="3807" height="1621" viewBox="0 0 3807 1621"><path d="M3755.8 560.9H3781.2L3768.5 547.8Z" fill="#a3a3a3"/></svg><div style="position:absolute;left:0px;top:246px;width:3807px;height:20px;background:linear-gradient(to bottom,rgba(0,0,0,.30),rgba(0,0,0,.15) 25%,rgba(0,0,0,.05) 60%,rgba(0,0,0,0))"></div><div style="position:absolute;left:0px;top:118px;width:3807px;height:128px;background:#041b34"></div><svg style="left:0;top:0;" width="3807" height="1621" viewBox="0 0 3807 1621"><path d="M166 157.2C163 157.5 161.5 159 160 161.5L143 191.5C141.5 194.5 142 196.5 144 197.6L165.6 185.9Z" fill="#cf3f22"/><path d="M168 157.2C171 157.5 172.5 159 174 161.5L191 191.5C192.5 194.5 192 196.5 190 197.6L168.4 185.9Z" fill="#3aa55d"/><path d="M167 186.9L189.2 199.5C190 200.5 189 202.3 187 202.3H147C145 202.3 143.5 200.5 144.8 199.5Z" fill="#2879f0"/><g fill="none" stroke="#efefef"><circle cx="213.6" cy="184.1" r="10.7" stroke-width="7.8"/><circle cx="274.6" cy="184.1" r="10.7" stroke-width="7.8"/><path d="M298.2 169.5V183.8A10.5 10.5 0 0 0 319.2 183.8" stroke-width="8.8"/><path d="M351.6 198.7V184.4A10.5 10.5 0 0 0 330.6 184.4" stroke-width="8.8"/></g><g fill="#efefef"><rect x="221.6" y="169.5" width="8.8" height="29.2"/><rect x="282.6" y="169.5" width="8.8" height="29.2"/><rect x="314.8" y="169.5" width="8.8" height="29.2"/><rect x="326.2" y="169.5" width="8.8" height="29.2"/><path d="M233.5 164.8L242 158.8V198.7H233.5Z"/><path d="M242 181L255.5 169.5H266L248.5 184.5L263 198.7H252L242 188.5Z"/></g></svg><svg style="left:0;top:0;" width="3807" height="1621" viewBox="0 0 3807 1621"><defs><clipPath id="av"><circle cx="3760" cy="183" r="40.2"/></clipPath><filter id="bl" x="-10%" y="-10%" width="120%" height="120%"><feGaussianBlur stdDeviation="1.1"/></filter></defs><g clip-path="url(#av)"><g filter="url(#bl)"><rect x="3712" y="138" width="96" height="92" fill="#2c4420"/><circle cx="3733" cy="163" r="8" fill="#4d6e2d"/><circle cx="3747" cy="151" r="6" fill="#5b7d33"/><circle cx="3726" cy="180" r="6" fill="#3f5f28"/><circle cx="3740" cy="176" r="5" fill="#22361a"/><circle cx="3797" cy="168" r="6" fill="#5a8136"/><circle cx="3730" cy="150" r="5" fill="#1f3018"/><path d="M3714 200L3746 185L3757 192L3754 228L3714 228Z" fill="#e7e2ee"/><path d="M3746 186L3758 190L3752 205L3739 216Z" fill="#d6a07e"/><path d="M3738 203L3741 218" stroke="#5a6aa8" stroke-width="2"/><ellipse cx="3759" cy="172" rx="11" ry="15" fill="#dda583" transform="rotate(-14 3759 172)"/><path d="M3751 178C3754 181 3759 181 3762 177" stroke="#c24a3c" stroke-width="2.2" fill="none"/><path d="M3752 166L3757 165M3764 168L3768 169" stroke="#3a2a24" stroke-width="1.6"/><path d="M3748 164C3752 148 3770 140 3784 148C3800 158 3803 186 3795 207C3789 220 3772 228 3753 226C3751 212 3756 200 3764 193C3773 184 3773 168 3768 160C3763 155 3755 156 3748 164Z" fill="#24262c"/><path d="M3776 160C3784 175 3786 195 3778 214M3786 165C3792 180 3792 196 3788 208M3768 200C3766 208 3764 214 3762 222" stroke="#4a4d55" stroke-width="1.6" fill="none"/></g></g></svg></body></html>
